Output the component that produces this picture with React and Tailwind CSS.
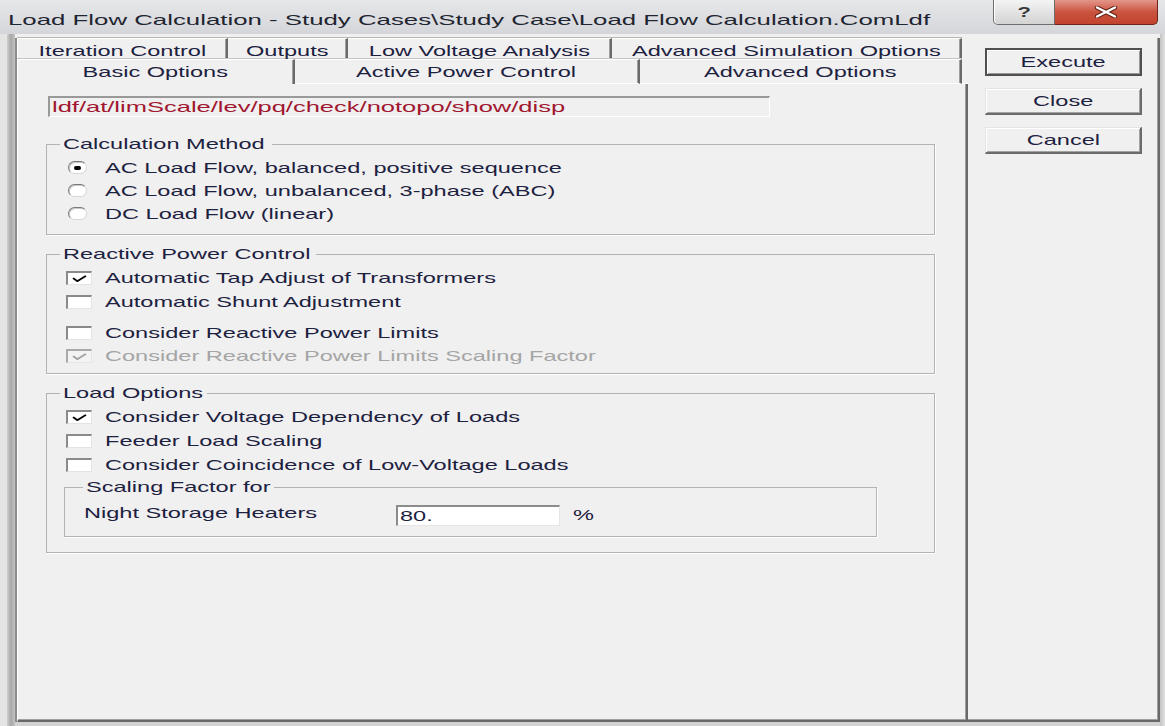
import React from 'react';

// Dialog text is drawn wide, so every label is stretched horizontally
const S = ({ children, k = 'scale-x-[1.57]', className = '' }) => (
  <span className={`inline-block align-top whitespace-nowrap origin-left leading-[18px] ${k} ${className}`}>{children}</span>
);

const SC = ({ children, className = '' }) => (
  <span className={`inline-block align-top whitespace-nowrap origin-center scale-x-[1.57] leading-[18px] ${className}`}>{children}</span>
);

const backTabs = [
  { label: 'Iteration Control', w: 'w-[211px]' },
  { label: 'Outputs', w: 'w-[120px]' },
  { label: 'Low Voltage Analysis', w: 'w-[264px]' },
  { label: 'Advanced Simulation Options', w: 'w-[350px]' },
];

const frontTabs = [
  { label: 'Basic Options', w: 'w-[278px]', active: true },
  { label: 'Active Power Control', w: 'w-[345px]' },
  { label: 'Advanced Options', w: 'w-[322px]' },
];

const Group = ({ label, lw, className = '', children }) => (
  <fieldset className={`border border-[#b3b3b3] shadow-[1px_1px_0_#ffffff] ${className}`}>
    <legend className={`ml-[13px] px-[3px] h-[18px] leading-[18px] ${lw}`}>
      <S>{label}</S>
    </legend>
    {children}
  </fieldset>
);

const Radio = ({ checked }) => (
  <span className="w-[19px] h-[13px] rounded-full bg-white border border-t-[#7a7a7a] border-l-[#7a7a7a] border-r-[#d6d6d6] border-b-[#d6d6d6] shadow-[inset_1px_1px_0_#c8c8c8] flex items-center justify-center shrink-0">
    {checked && <span className="w-[7px] h-[4px] rounded-full bg-black" />}
  </span>
);

const Check = ({ checked, disabled }) => (
  <span
    className={`w-[26px] h-[14px] border-t-2 border-l-2 border-r border-b flex items-center justify-center shrink-0 ${
      disabled
        ? 'bg-[#f3f3f3] border-t-[#a9a9a9] border-l-[#a9a9a9] border-r-[#e6e6e6] border-b-[#e6e6e6]'
        : 'bg-white border-t-[#8a8a8a] border-l-[#8a8a8a] border-r-[#e3e3e3] border-b-[#e3e3e3]'
    }`}
  >
    {checked && (
      <svg viewBox="0 0 14 8" preserveAspectRatio="none" className="w-[15px] h-[7px]">
        <path d="M1 3.6 L5 7 L13 1" fill="none" stroke={disabled ? '#a0a0a0' : '#000'} strokeWidth="2" />
      </svg>
    )}
  </span>
);

const CheckRow = ({ label, checked, disabled, className = '' }) => (
  <div className={`h-[24px] flex items-center pl-[19px] ${className}`}>
    <Check checked={checked} disabled={disabled} />
    <S className={`ml-[13px] ${disabled ? 'text-[#a5a5a5]' : ''}`}>{label}</S>
  </div>
);

const RadioRow = ({ label, checked }) => (
  <div className="h-[23px] flex items-center pl-[21px]">
    <Radio checked={checked} />
    <S className="ml-[18px]">{label}</S>
  </div>
);

const Button = ({ label, isDefault, className = '' }) => (
  <div
    className={`w-[157px] flex items-center justify-center bg-[#f0f0f0] ${
      isDefault
        ? 'h-[28px] border-2 border-[#505050] shadow-[inset_1px_1px_0_#ffffff,inset_-1px_-1px_0_#9a9a9a]'
        : 'h-[27px] border-t border-l border-t-[#e4e4e4] border-l-[#e4e4e4] border-r-2 border-b-2 border-r-[#6b6b6b] border-b-[#6b6b6b] shadow-[inset_1px_1px_0_#ffffff,inset_-1px_-1px_0_#a3a3a3]'
    } ${className}`}
  >
    <SC>{label}</SC>
  </div>
);

export default function App() {
  return (
    <div className="w-[1165px] h-[726px] overflow-hidden bg-[#f0f0f0] text-[15px] text-[#1d2140] font-['Liberation_Sans',Arial,sans-serif] flex flex-col">
      {/* title bar */}
      <div className="h-[34px] flex items-start bg-linear-to-b from-[#e6e7e9] to-[#d4d6d9] shrink-0">
        <div className="flex-1 pl-[8px] pt-[11px]">
          <S k="scale-x-[1.72]" className="text-[#1f2530]">
            {'Load Flow Calculation - Study Cases\\Study Case\\Load Flow Calculation.ComLdf'}
          </S>
        </div>
        <div className="w-[62px] h-[25px] rounded-bl-[5px] border border-t-0 border-[#6d6d6d] bg-linear-to-b from-[#f4f4f4] to-[#d3d3d3] shadow-[inset_1px_0_0_#ffffff] flex items-center justify-center">
          <SC className="text-[14px] font-bold text-[#3a3a3a]">?</SC>
        </div>
        <div className="w-[103px] h-[25px] rounded-br-[5px] border border-t-0 border-l-0 border-[#6e2418] bg-linear-to-b from-[#e3968a] via-[#c9533e] to-[#c2432d] flex items-center justify-center">
          <svg viewBox="0 0 26 12" preserveAspectRatio="none" className="w-[26px] h-[12px]">
            <path d="M4 1.5 L22 10.5 M22 1.5 L4 10.5" stroke="#5b1d12" strokeWidth="4.2" strokeLinecap="round" />
            <path d="M4 1.5 L22 10.5 M22 1.5 L4 10.5" stroke="#ffffff" strokeWidth="2.4" strokeLinecap="round" />
          </svg>
        </div>
        <div className="w-[7px]" />
      </div>

      <div className="flex flex-1">
        {/* left window frame */}
        <div className="w-[15px] flex">
          <div className="w-[7px] bg-[#e4e4e4]" />
          <div className="w-[8px] bg-linear-to-r from-[#cfcfcf] via-[#a8a8a8] to-[#c4c4c4]" />
        </div>

        <div className="flex flex-col flex-1">
          <div className="h-[4px]" />
          <div className="flex h-[684px]">
            {/* tab control */}
            <div className="w-[953px] flex flex-col border-l-2 border-l-[#8c8c8c]">
              <div className="h-[21px] flex">
                {backTabs.map((t, i) => (
                  <div
                    key={t.label}
                    className={`${t.w} h-full flex items-center justify-center pt-[3px] border-t border-t-white border-r-2 border-r-[#6a6a6a] shadow-[0_-1px_0_#b8b8b8,inset_-1px_0_0_#a0a0a0] ${
                      i === 0 ? 'border-l border-l-white' : ''
                    }`}
                  >
                    <SC>{t.label}</SC>
                  </div>
                ))}
              </div>
              <div className="h-[25px] flex">
                {frontTabs.map((t, i) => (
                  <div
                    key={t.label}
                    className={`${t.w} h-full flex items-center justify-center border-t border-t-white border-r-2 border-r-[#6a6a6a] shadow-[0_-1px_0_#c4c4c4,inset_-1px_0_0_#a0a0a0] ${
                      i === 0 ? 'border-l border-l-white' : ''
                    } ${t.active ? '' : 'border-b border-b-white'}`}
                  >
                    <SC>{t.label}</SC>
                  </div>
                ))}
                <div className="flex-1 border-b border-b-white" />
              </div>

              {/* Basic Options page */}
              <div className="flex-1 flex flex-col border-l border-l-white border-r-2 border-r-[#696969] border-b-2 border-b-[#696969] shadow-[inset_-1px_-1px_0_#a0a0a0] pl-[28px] pt-[12px]">
                <div className="ml-[2px] w-[722px] h-[21px] border-t-2 border-l-2 border-t-[#999999] border-l-[#999999] border-r border-b border-r-white border-b-white flex items-center pl-[2px]">
                  <S k="scale-x-[1.7]" className="text-[#a0172f]">ldf/at/limScale/lev/pq/check/notopo/show/disp</S>
                </div>

                <Group label="Calculation Method" lw="w-[212px]" className="w-[889px] mt-[18px]">
                  <div className="pt-[3px] pb-[9px]">
                    <RadioRow label="AC Load Flow, balanced, positive sequence" checked />
                    <RadioRow label="AC Load Flow, unbalanced, 3-phase (ABC)" />
                    <RadioRow label="DC Load Flow (linear)" />
                  </div>
                </Group>

                <Group label="Reactive Power Control" lw="w-[256px]" className="w-[889px] mt-[10px]">
                  <div className="pt-[3px] pb-[6px]">
                    <CheckRow label="Automatic Tap Adjust of Transformers" checked />
                    <CheckRow label="Automatic Shunt Adjustment" />
                    <CheckRow label="Consider Reactive Power Limits" className="mt-[7px]" />
                    <div className="h-[22px] flex items-center pl-[19px]">
                      <Check checked disabled />
                      <S className="ml-[13px] text-[#a5a5a5]">Consider Reactive Power Limits Scaling Factor</S>
                    </div>
                  </div>
                </Group>

                <Group label="Load Options" lw="w-[147px]" className="w-[889px] mt-[10px]">
                  <div className="pt-[3px] pb-[15px]">
                    <CheckRow label="Consider Voltage Dependency of Loads" checked />
                    <CheckRow label="Feeder Load Scaling" />
                    <CheckRow label="Consider Coincidence of Low-Voltage Loads" />

                    <fieldset className="ml-[17px] mt-[1px] w-[813px] border border-[#b3b3b3] shadow-[1px_1px_0_#ffffff]">
                      <legend className="ml-[18px] px-[3px] h-[18px] leading-[18px] w-[191px]">
                        <S>Scaling Factor for</S>
                      </legend>
                      <div className="pt-[7px] pb-[9px]">
                        <div className="h-[24px] flex items-center pl-[19px]">
                          <div className="w-[312px]">
                            <S>Night Storage Heaters</S>
                          </div>
                          <div className="w-[164px] h-[21px] bg-white border-t-2 border-l-2 border-t-[#8c8c8c] border-l-[#8c8c8c] border-r border-b border-r-[#e6e6e6] border-b-[#e6e6e6] flex items-center pl-[2px]">
                            <S>80.</S>
                          </div>
                          <S className="ml-[13px]">%</S>
                        </div>
                      </div>
                    </fieldset>
                  </div>
                </Group>
              </div>
            </div>

            {/* command buttons */}
            <div className="w-[192px] flex flex-col items-start border-r-2 border-b-2 border-r-[#696969] border-b-[#696969] shadow-[inset_-1px_-1px_0_#a0a0a0] pl-[17px] pt-[10px]">
              <Button label="Execute" isDefault />
              <Button label="Close" className="mt-[12px]" />
              <Button label="Cancel" className="mt-[12px]" />
            </div>
          </div>
          <div className="h-[4px] bg-[#d2d2d2]" />
        </div>

        {/* right window frame */}
        <div className="w-[5px] bg-linear-to-r from-[#c4c4c4] to-[#e2e2e2]" />
      </div>
    </div>
  );
}
